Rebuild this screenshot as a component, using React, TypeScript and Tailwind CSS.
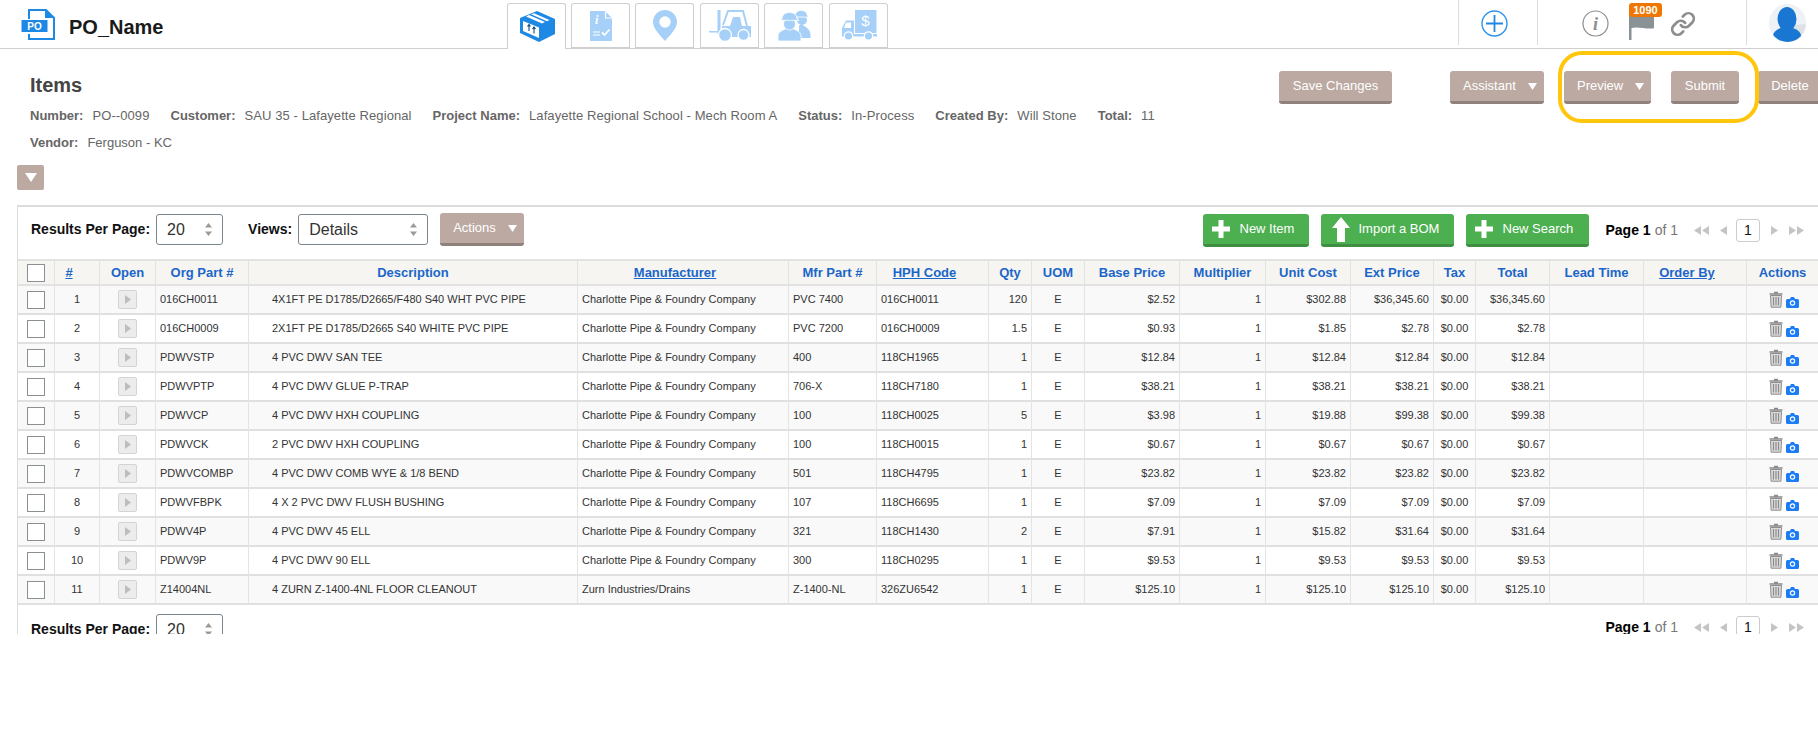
import { Link } from 'lucide-react';
import type { ReactNode } from 'react';

const rows = [
  ['1', '016CH0011', '4X1FT PE D1785/D2665/F480 S40 WHT PVC PIPE', 'Charlotte Pipe & Foundry Company', 'PVC 7400', '016CH0011', '120', '$2.52', '$302.88', '$36,345.60', '$36,345.60'],
  ['2', '016CH0009', '2X1FT PE D1785/D2665 S40 WHITE PVC PIPE', 'Charlotte Pipe & Foundry Company', 'PVC 7200', '016CH0009', '1.5', '$0.93', '$1.85', '$2.78', '$2.78'],
  ['3', 'PDWVSTP', '4 PVC DWV SAN TEE', 'Charlotte Pipe & Foundry Company', '400', '118CH1965', '1', '$12.84', '$12.84', '$12.84', '$12.84'],
  ['4', 'PDWVPTP', '4 PVC DWV GLUE P-TRAP', 'Charlotte Pipe & Foundry Company', '706-X', '118CH7180', '1', '$38.21', '$38.21', '$38.21', '$38.21'],
  ['5', 'PDWVCP', '4 PVC DWV HXH COUPLING', 'Charlotte Pipe & Foundry Company', '100', '118CH0025', '5', '$3.98', '$19.88', '$99.38', '$99.38'],
  ['6', 'PDWVCK', '2 PVC DWV HXH COUPLING', 'Charlotte Pipe & Foundry Company', '100', '118CH0015', '1', '$0.67', '$0.67', '$0.67', '$0.67'],
  ['7', 'PDWVCOMBP', '4 PVC DWV COMB WYE & 1/8 BEND', 'Charlotte Pipe & Foundry Company', '501', '118CH4795', '1', '$23.82', '$23.82', '$23.82', '$23.82'],
  ['8', 'PDWVFBPK', '4 X 2 PVC DWV FLUSH BUSHING', 'Charlotte Pipe & Foundry Company', '107', '118CH6695', '1', '$7.09', '$7.09', '$7.09', '$7.09'],
  ['9', 'PDWV4P', '4 PVC DWV 45 ELL', 'Charlotte Pipe & Foundry Company', '321', '118CH1430', '2', '$7.91', '$15.82', '$31.64', '$31.64'],
  ['10', 'PDWV9P', '4 PVC DWV 90 ELL', 'Charlotte Pipe & Foundry Company', '300', '118CH0295', '1', '$9.53', '$9.53', '$9.53', '$9.53'],
  ['11', 'Z14004NL', '4 ZURN Z-1400-4NL FLOOR CLEANOUT', 'Zurn Industries/Drains', 'Z-1400-NL', '326ZU6542', '1', '$125.10', '$125.10', '$125.10', '$125.10'],
];

const meta = [
  ['Number:', 'PO--0099'],
  ['Customer:', 'SAU 35 - Lafayette Regional'],
  ['Project Name:', 'Lafayette Regional School - Mech Room A'],
  ['Status:', 'In-Process'],
  ['Created By:', 'Will Stone'],
  ['Total:', '11'],
];

function Caret({ className = '' }: { className?: string }) {
  return (
    <svg width="9" height="7" viewBox="0 0 9 7" className={className}>
      <path d="M0 0h9L4.5 7z" fill="#fff" />
    </svg>
  );
}

function TanButton({ label, caret, className = '' }: { label: string; caret?: boolean; className?: string }) {
  return (
    <div className={`flex h-[33px] shrink-0 items-center rounded-[3px] border-b-[3px] border-[#8f817b] bg-[#bba9a2] text-[13px] text-white ${caret ? 'justify-between pl-[13px] pr-[7px]' : 'justify-center'} ${className}`}>
      <span>{label}</span>
      {caret && <Caret />}
    </div>
  );
}

function GreenButton({ label, icon, className = '' }: { label: string; icon: 'plus' | 'up'; className?: string }) {
  return (
    <div className={`flex h-[33px] shrink-0 items-center rounded-[3px] border-b-[3px] border-[#3f8f43] bg-[#4caf50] text-[13px] text-white ${className}`}>
      {icon === 'plus' ? (
        <svg width="18" height="18" viewBox="0 0 18 18" className="ml-[9px] mr-[10px]">
          <path d="M6.5 0h5v6.5H18v5h-6.5V18h-5v-6.5H0v-5h6.5z" fill="#fff" />
        </svg>
      ) : (
        <svg width="18" height="25" viewBox="0 0 18 25" className="ml-[11px] mr-[9px]">
          <path d="M9 0l9 11h-5v14H5V11H0z" fill="#fff" />
        </svg>
      )}
      <span>{label}</span>
    </div>
  );
}

function FakeSelect({ value, className = '' }: { value: string; className?: string }) {
  return (
    <div className={`flex h-[31px] shrink-0 items-center justify-between rounded-[3px] border border-[#7b858c] bg-white pl-[10px] pr-[10px] text-[16px] text-[#333] ${className}`}>
      <span>{value}</span>
      <svg width="7" height="13" viewBox="0 0 7 13">
        <path d="M3.5 0L7 4.5H0zM3.5 13L0 8.5h7z" fill="#9a9a9a" />
      </svg>
    </div>
  );
}

function Pager() {
  return (
    <div className="ml-[17px] flex items-center text-[#c4c4c4]">
      <span className="text-[14px] font-bold text-black">Page 1</span>
      <span className="ml-[4px] text-[14px] text-[#777]">of 1</span>
      <svg width="15" height="9" viewBox="0 0 15 9" className="ml-[16px]">
        <path d="M7 0v9L0 4.5zM15 0v9L8 4.5z" fill="currentColor" />
      </svg>
      <svg width="7" height="9" viewBox="0 0 7 9" className="ml-[11px]">
        <path d="M7 0v9L0 4.5z" fill="currentColor" />
      </svg>
      <div className="ml-[9px] flex h-[23px] w-[24px] items-center justify-center rounded-[3px] border border-[#ccc] text-[14px] text-[#111]">1</div>
      <svg width="7" height="9" viewBox="0 0 7 9" className="ml-[11px]">
        <path d="M0 0v9l7-4.5z" fill="currentColor" />
      </svg>
      <svg width="15" height="9" viewBox="0 0 15 9" className="ml-[11px]">
        <path d="M0 0v9l7-4.5zM8 0v9l7-4.5z" fill="currentColor" />
      </svg>
    </div>
  );
}

function ToolbarLeft({ full }: { full?: boolean }) {
  return (
    <div className="flex items-start">
      <span className="ml-[13px] mt-[8px] text-[14px] leading-none font-bold text-[#111]">Results Per Page:</span>
      <FakeSelect value="20" className="ml-[6px] w-[67px]" />
      {full && (
        <>
          <span className="ml-[25px] mt-[8px] text-[14px] leading-none font-bold text-[#111]">Views:</span>
          <FakeSelect value="Details" className="ml-[6px] w-[130px]" />
          <TanButton label="Actions" caret className="ml-[12px] -mt-px w-[84px]" />
        </>
      )}
    </div>
  );
}

function Th({ label, link, className = '' }: { label: string; link?: boolean; className?: string }) {
  return (
    <th className={`h-[27px] border-t-2 border-r border-b-2 border-[#e2e2e2] bg-[#f6f5f1] p-0 text-center text-[13px] font-bold text-[#1b66c9] ${link ? 'pr-[16px] underline' : ''} ${className}`}>
      {label}
    </th>
  );
}

function Td({ children, className = '' }: { children?: ReactNode; className?: string }) {
  return <td className={`h-[29px] border-r border-b-2 border-[#e0e0e0] border-r-[#e4e4e4] p-0 ${className}`}>{children}</td>;
}

function Checkbox() {
  return <div className="ml-[9px] h-[18px] w-[18px] border border-[#8a8f93] bg-white" />;
}

const tabClass = 'flex h-[46px] w-[59px] shrink-0 items-center justify-center rounded-t-[3px] border-x border-t border-[#cfcfcf]';

function BoxIcon() {
  return (
    <svg width="36" height="32" viewBox="0 0 36 32">
      <path d="M18 0l18 8v15L20 31 1 22V7z" fill="#1e88e5" />
      <path d="M4 10l16 6.5v10.5L4 20z" fill="#fff" />
      <path d="M7 5.5l16 7 3-1.5L10 4zM12 3.3l16 7 2.5-1.2L15 2.2z" fill="#fff" />
      <path d="M10 20v-6M8.5 15.5l1.5-2 1.5 2M15 22.5v-6M13.5 18l1.5-2 1.5 2" stroke="#14497f" strokeWidth="1.1" fill="none" />
    </svg>
  );
}

function DocCheckIcon() {
  return (
    <svg width="22" height="30" viewBox="0 0 22 30">
      <path d="M0 0h15l7 7v23H0z" fill="#a6d0f7" />
      <path d="M15.5 0.5v6.5h6.5" fill="none" stroke="#fff" strokeWidth="1.2" />
      <text x="5" y="13" fontSize="12" fontWeight="700" fontStyle="italic" fontFamily="Liberation Serif, serif" fill="#fff">i</text>
      <path d="M3 21h7M3 24h7" stroke="#fff" strokeWidth="1.2" />
      <path d="M12 21.5l2.5 2.5 5-5.5" stroke="#fff" strokeWidth="1.8" fill="none" />
    </svg>
  );
}

function PinIcon() {
  return (
    <svg width="24" height="31" viewBox="0 0 24 31">
      <path fillRule="evenodd" d="M12 0c6.6 0 12 5.2 12 11.7C24 19 16 26 12 31 8 26 0 19 0 11.7 0 5.2 5.4 0 12 0zm0 6.3a5.7 5.7 0 100 11.4 5.7 5.7 0 000-11.4z" fill="#a6d0f7" />
    </svg>
  );
}

function ForkliftIcon() {
  return (
    <svg width="42" height="31" viewBox="0 0 42 31">
      <path d="M8.5 0h3v24h-3zM0 21h10v1.6H0z" fill="#a6d0f7" />
      <path d="M14 15l5-14h15l4 15" fill="none" stroke="#a6d0f7" strokeWidth="2" />
      <path d="M13 16h8l3-9h7l2 9h9v11H13z" fill="#a6d0f7" />
      <circle cx="16" cy="25" r="6.5" fill="#a6d0f7" stroke="#fff" strokeWidth="1.3" />
      <circle cx="34.5" cy="25" r="5.5" fill="#a6d0f7" stroke="#fff" strokeWidth="1.3" />
    </svg>
  );
}

function WorkersIcon() {
  return (
    <svg width="34" height="31" viewBox="0 0 34 31">
      <path d="M24 14c2.5 2 9.5 4 9.5 11v3H22V16z" fill="#a6d0f7" />
      <circle cx="25" cy="10" r="5" fill="#a6d0f7" />
      <path d="M18 6c0-3.5 3-5.5 6-5.5 3.5 0 6.5 2 6.5 5.5l1.5 1H18z" fill="#a6d0f7" stroke="#fff" strokeWidth="0.8" />
      <path d="M1 31v-5c0-5 6-6 9-8h5c3 2 9 3 9 8v5z" fill="#a6d0f7" stroke="#fff" strokeWidth="0.8" />
      <circle cx="12.5" cy="14" r="6" fill="#a6d0f7" stroke="#fff" strokeWidth="0.8" />
      <path d="M5 9c0-4.5 3.5-6.5 7.5-6.5S20 4.5 20 9l2 1.3H3z" fill="#a6d0f7" stroke="#fff" strokeWidth="0.8" />
    </svg>
  );
}

function TruckIcon() {
  return (
    <svg width="36" height="31" viewBox="0 0 36 31">
      <path d="M14 0h21.5v23H14z" fill="#a6d0f7" />
      <path d="M1 18l4-7.5h8V24H36v2.5H1z" fill="#a6d0f7" />
      <path d="M5 12.5h5V18H3z" fill="#fff" />
      <text x="24.5" y="16" textAnchor="middle" fontSize="15" fontFamily="Liberation Sans, sans-serif" fill="#fff">$</text>
      <circle cx="7.5" cy="26" r="4.2" fill="#a6d0f7" stroke="#fff" strokeWidth="1.2" />
      <circle cx="27.5" cy="26" r="4.2" fill="#a6d0f7" stroke="#fff" strokeWidth="1.2" />
    </svg>
  );
}

function TrashIcon() {
  return (
    <svg width="14" height="17" viewBox="0 0 14 17">
      <path d="M5 1.5h4M0.5 3h13" stroke="#8c8c8c" strokeWidth="1.5" fill="none" />
      <path d="M1.5 4.5h11l-0.6 11.7H2.1z" fill="#dcdcdc" stroke="#8c8c8c" strokeWidth="1" />
      <path d="M4.5 6v8.5M7 6v8.5M9.5 6v8.5" stroke="#8c8c8c" strokeWidth="1.2" />
    </svg>
  );
}

function CameraIcon() {
  return (
    <svg width="13" height="11" viewBox="0 0 13 11">
      <path d="M1.5 2H4L5 0h3l1 2h2.5A1.5 1.5 0 0113 3.5v6a1.5 1.5 0 01-1.5 1.5h-10A1.5 1.5 0 010 9.5v-6A1.5 1.5 0 011.5 2z" fill="#1c7cf5" />
      <circle cx="6.5" cy="6" r="2.1" fill="none" stroke="#fff" strokeWidth="1.2" />
    </svg>
  );
}

export default function App() {
  return (
    <div className="relative h-[752px] w-full overflow-hidden bg-white font-['Liberation_Sans',Arial,sans-serif]">
      {/* Top nav */}
      <div className="flex h-[49px] border-b border-[#cfcfcf]">
        <div className="flex w-[507px] shrink-0 items-center">
          <svg width="35" height="31" viewBox="0 0 35 31" className="ml-[21px]">
            <path d="M8 10V1h17l8 8v21H8v-5" fill="#fff" stroke="#1e88e5" strokeWidth="2" />
            <path d="M24 1v8h9z" fill="#1e88e5" />
            <rect x="0.5" y="11" width="26" height="12" fill="#1e88e5" />
            <text x="13.5" y="20.5" textAnchor="middle" fontSize="10" fontWeight="700" fontFamily="Liberation Sans, sans-serif" fill="#fff">PO</text>
          </svg>
          <span className="ml-[13px] mt-[5px] text-[20px] font-bold text-[#1a1a1a]">PO_Name</span>
        </div>
        <div className="mt-[3px] flex gap-[5px]">
          <div className={`${tabClass} relative z-10 border-b-0 bg-white`}><BoxIcon /></div>
          <div className={`${tabClass} border-b-2`}><DocCheckIcon /></div>
          <div className={`${tabClass} border-b-2`}><PinIcon /></div>
          <div className={`${tabClass} ml-px border-b-2`}><ForkliftIcon /></div>
          <div className={`${tabClass} border-b-2`}><WorkersIcon /></div>
          <div className={`${tabClass} ml-px border-b-2`}><TruckIcon /></div>
        </div>
        <div className="ml-[570px] flex h-[45px]">
          <div className="flex w-[80px] items-center justify-center border-x border-[#ddd] pr-[8px]">
            <svg width="27" height="27" viewBox="0 0 27 27" className="mt-px">
              <circle cx="13.5" cy="13.5" r="12.5" fill="none" stroke="#2f93ea" strokeWidth="1.4" />
              <path d="M13.5 5v17M5 13.5h17" stroke="#1e88e5" strokeWidth="1.8" />
            </svg>
          </div>
          <div className="relative flex w-[209px] items-center border-r border-[#ddd]">
            <svg width="27" height="27" viewBox="0 0 27 27" className="ml-[44px] mt-px">
              <circle cx="13.5" cy="13.5" r="12.5" fill="none" stroke="#8d8d8d" strokeWidth="1.2" />
              <text x="13.5" y="20" textAnchor="middle" fontSize="18" fontWeight="700" fontStyle="italic" fontFamily="Liberation Serif, serif" fill="#8d8d8d">i</text>
            </svg>
            <svg width="25" height="28" viewBox="0 0 25 28" className="ml-[20px] mt-[6px]">
              <path d="M0 2h2.5v26H0zM2.5 4h23v12c-7 2-16-2-23 0z" fill="#8a9296" />
            </svg>
            <Link size={26} strokeWidth={2.5} className="ml-[16px] mt-[2px] text-[#8d8d8d]" />
            <span className="absolute left-[91px] top-[3px] flex h-[14px] w-[33px] items-center justify-center rounded-[3px] bg-[#ef7600] text-[11px] font-bold text-white">1090</span>
          </div>
          <div className="ml-[22px] mt-[4px] h-[38px] w-[37px] overflow-hidden rounded-full bg-[#eef2f6]">
            <svg width="37" height="38" viewBox="0 0 37 38">
              <path d="M16 22L37 20v18H16z" fill="#dde2e7" />
              <ellipse cx="18" cy="15" rx="9.5" ry="12" fill="#1976d2" />
              <ellipse cx="18" cy="32" rx="14" ry="9" fill="#1976d2" />
            </svg>
          </div>
        </div>
      </div>

      {/* Title and action buttons */}
      <div className="flex">
        <div className="w-[1279px] shrink-0">
          <h1 className="ml-[30px] mt-[24px] text-[20px] leading-[24px] font-bold text-[#444]">Items</h1>
          <div className="ml-[30px] mt-[10px] flex h-[16px] items-center gap-[21px] text-[13px] leading-none text-[#666]">
            {meta.map(([label, value]) => (
              <div key={label} className="flex gap-[9px]">
                <span className="font-bold">{label}</span>
                <span className="tracking-[0.085px]">{value}</span>
              </div>
            ))}
          </div>
          <div className="ml-[30px] mt-[11px] flex h-[16px] items-center gap-[9px] text-[13px] leading-none text-[#666]">
            <span className="font-bold">Vendor:</span>
            <span>Ferguson - KC</span>
          </div>
          <div className="ml-[17px] mt-[15px] flex h-[25px] w-[27px] items-center justify-center rounded-[2px] bg-[#bba9a2]">
            <svg width="12" height="9" viewBox="0 0 12 9">
              <path d="M0 0h12L6 9z" fill="#fff" />
            </svg>
          </div>
        </div>
        <div className="mt-[22px] flex items-start">
          <TanButton label="Save Changes" className="w-[113px]" />
          <TanButton label="Assistant" caret className="ml-[58px] w-[94px]" />
          <TanButton label="Preview" caret className="ml-[20px] w-[87px]" />
          <TanButton label="Submit" className="ml-[20px] w-[68px]" />
          <TanButton label="Delete" className="ml-[19px] w-[64px] rounded-r-none" />
        </div>
      </div>

      {/* Items table card */}
      <div className="ml-[17px] mt-[15px] h-[429px] overflow-hidden border-t-2 border-l border-[#dcdcdc]">
        <div className="flex h-[52px] items-start pt-[7px]">
          <ToolbarLeft full />
          <div className="ml-auto flex items-center">
            <GreenButton label="New Item" icon="plus" className="w-[106px]" />
            <GreenButton label="Import a BOM" icon="up" className="ml-[12px] w-[133px]" />
            <GreenButton label="New Search" icon="plus" className="ml-[12px] w-[123px]" />
            <Pager />
          </div>
          <div className="w-[14px] shrink-0" />
        </div>
        <table className="w-[1800px] table-fixed border-separate border-spacing-0 text-[11px] text-[#333]">
          <colgroup>
            <col className="w-[37px]" />
            <col className="w-[45px]" />
            <col className="w-[56px]" />
            <col className="w-[93px]" />
            <col className="w-[329px]" />
            <col className="w-[211px]" />
            <col className="w-[88px]" />
            <col className="w-[112px]" />
            <col className="w-[43px]" />
            <col className="w-[53px]" />
            <col className="w-[95px]" />
            <col className="w-[86px]" />
            <col className="w-[85px]" />
            <col className="w-[83px]" />
            <col className="w-[42px]" />
            <col className="w-[74px]" />
            <col className="w-[94px]" />
            <col className="w-[103px]" />
            <col className="w-[71px]" />
          </colgroup>
          <thead>
            <tr>
              <th className="h-[27px] border-t-2 border-r border-b-2 border-[#e2e2e2] bg-[#f6f5f1] p-0"><Checkbox /></th>
              <Th label="#" link />
              <Th label="Open" />
              <Th label="Org Part #" />
              <Th label="Description" />
              <Th label="Manufacturer" link />
              <Th label="Mfr Part #" />
              <Th label="HPH Code" link />
              <Th label="Qty" />
              <Th label="UOM" />
              <Th label="Base Price" />
              <Th label="Multiplier" />
              <Th label="Unit Cost" />
              <Th label="Ext Price" />
              <Th label="Tax" />
              <Th label="Total" />
              <Th label="Lead Time" />
              <Th label="Order By" link />
              <Th label="Actions" className="border-r-0" />
            </tr>
          </thead>
          <tbody>
            {rows.map((r, i) => (
              <tr key={r[0]} className={i % 2 === 0 ? 'bg-[#f9f9f9]' : 'bg-white'}>
                <Td><Checkbox /></Td>
                <Td className="text-center">{r[0]}</Td>
                <Td>
                  <div className="mx-auto flex h-[19px] w-[19px] items-center justify-center rounded-[2px] border border-[#d4d4d4] bg-[#ececec]">
                    <svg width="6" height="9" viewBox="0 0 6 9">
                      <path d="M0 0v9l6-4.5z" fill="#bdbdbd" />
                    </svg>
                  </div>
                </Td>
                <Td className="pl-[4px]">{r[1]}</Td>
                <Td className="pl-[23px]">{r[2]}</Td>
                <Td className="pl-[4px]">{r[3]}</Td>
                <Td className="pl-[4px]">{r[4]}</Td>
                <Td className="pl-[4px]">{r[5]}</Td>
                <Td className="pr-[4px] text-right">{r[6]}</Td>
                <Td className="text-center">E</Td>
                <Td className="pr-[4px] text-right">{r[7]}</Td>
                <Td className="pr-[4px] text-right">1</Td>
                <Td className="pr-[4px] text-right">{r[8]}</Td>
                <Td className="pr-[4px] text-right">{r[9]}</Td>
                <Td className="text-center">$0.00</Td>
                <Td className="pr-[4px] text-right">{r[10]}</Td>
                <Td />
                <Td />
                <Td className="border-r-0">
                  <div className="ml-[22px] flex items-end gap-[3px]">
                    <TrashIcon />
                    <CameraIcon />
                  </div>
                </Td>
              </tr>
            ))}
          </tbody>
        </table>
        <div className="flex items-start pt-[9px]">
          <ToolbarLeft />
          <div className="ml-auto flex h-[26px] items-center">
            <Pager />
          </div>
          <div className="w-[14px] shrink-0" />
        </div>
      </div>

      {/* Highlight drawn over the screenshot */}
      <div className="absolute left-[1558px] top-[51px] h-[72px] w-[201px] rounded-[24px] border-[4px] border-[#ffc60b]" />
    </div>
  );
}
